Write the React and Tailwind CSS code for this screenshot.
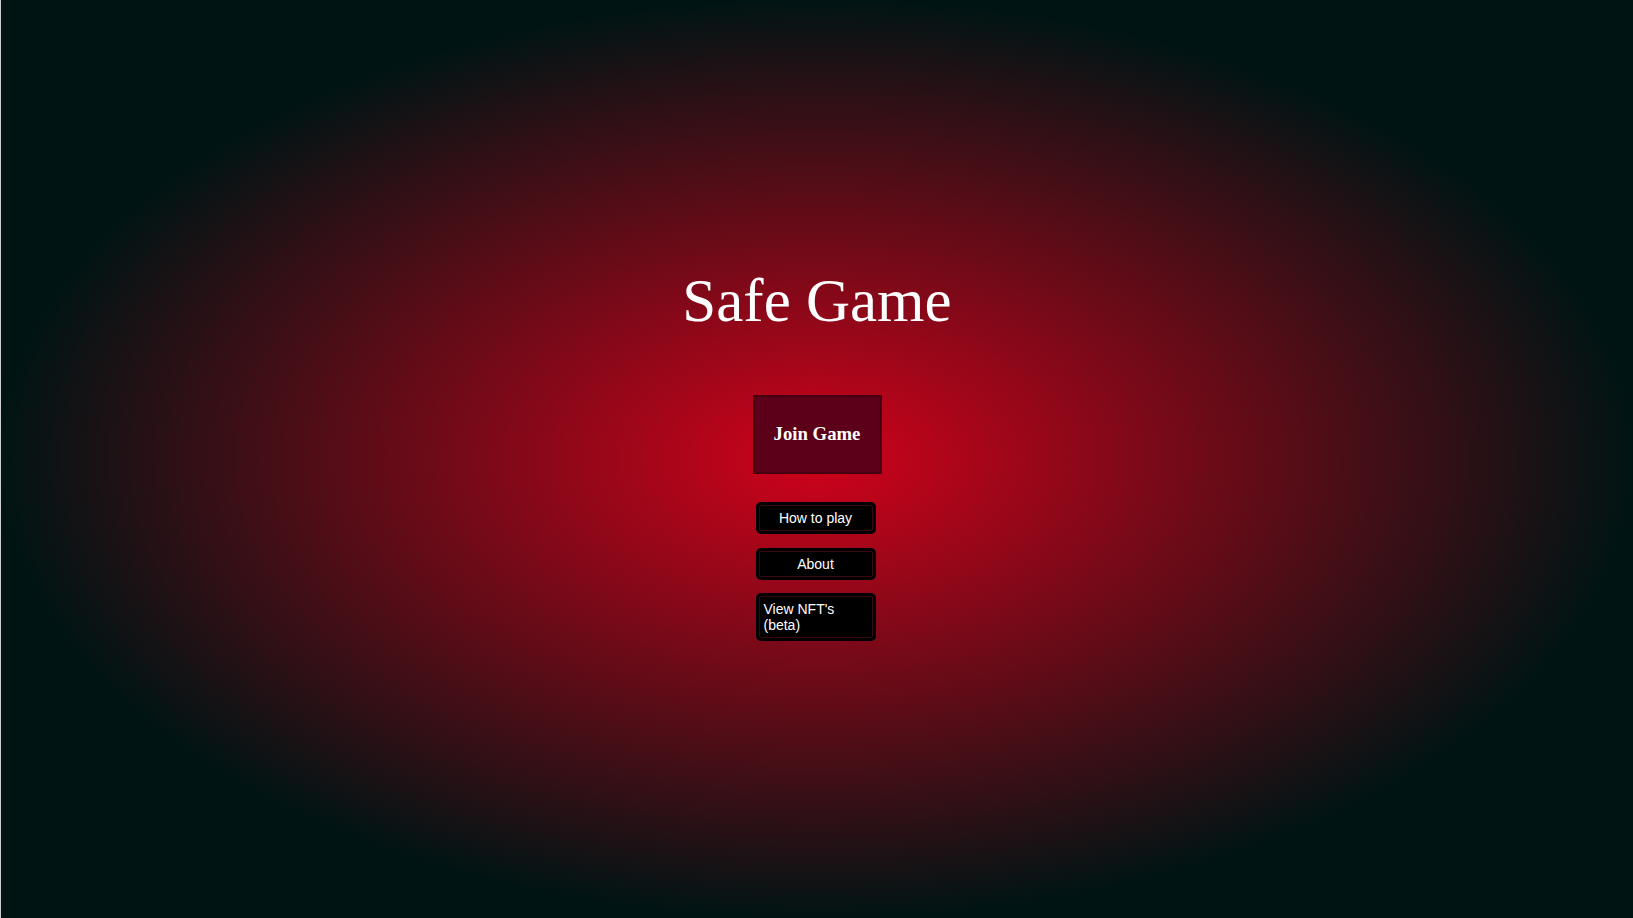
import React from 'react';

const menu = [
  { label: 'How to play', align: 'text-center' },
  { label: 'About', align: 'text-center' },
  { label: "View NFT's (beta)", align: 'text-left' },
];

export default function App() {
  return (
    <div className="w-full h-[918px] overflow-hidden border-l border-[#cfcfcf] bg-[#011414] bg-[radial-gradient(closest-side,#d0021b_0%,#011414_100%)] flex flex-col items-center">
      <h1 className="mt-[270px] text-[61px] leading-none text-white font-normal font-['Liberation_Serif',serif]">
        Safe Game
      </h1>

      <button className="mt-[64px] w-[129px] h-[79px] flex items-center justify-center bg-[#5c0019] border-2 border-[#470012] text-white">
        <span className="text-[18.72px] font-bold font-['Liberation_Serif',serif]">Join Game</span>
      </button>

      <div className="mt-[28px] mr-[3px] flex flex-col gap-[13.5px]">
        {menu.map(m => (
          <button
            key={m.label}
            className={`w-[120px] border-[3px] border-black rounded-[5px] bg-black shadow-[inset_0_0_0_1px_#3a0810] px-[5px] py-[5px] text-[14px] leading-4 text-white font-['Liberation_Sans',Arial,sans-serif] ${m.align}`}
          >
            {m.label}
          </button>
        ))}
      </div>
    </div>
  );
}
